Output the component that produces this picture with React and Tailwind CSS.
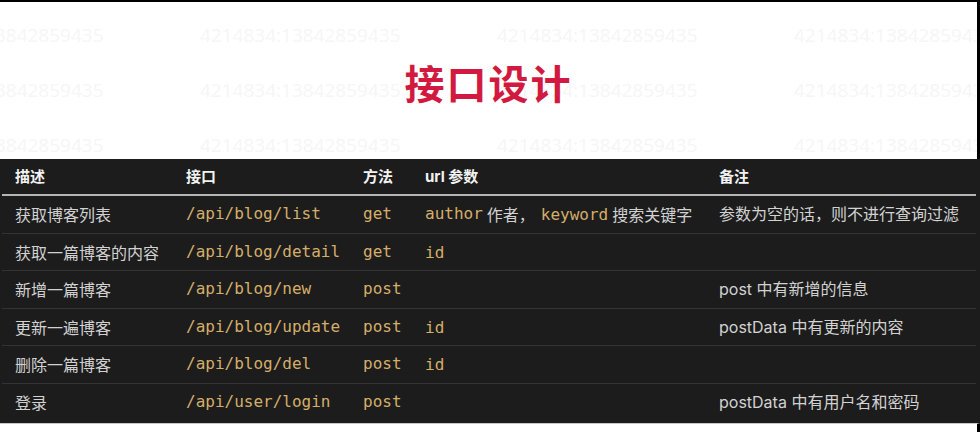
const mono = { fontFamily: '"DejaVu Sans Mono", "Liberation Mono", monospace' };

const rows = [
  { desc: '获取博客列表', api: '/api/blog/list', method: 'get', params: 'list', note: '参数为空的话，则不进行查询过滤' },
  { desc: '获取一篇博客的内容', api: '/api/blog/detail', method: 'get', params: 'id', note: '' },
  { desc: '新增一篇博客', api: '/api/blog/new', method: 'post', params: '', note: 'post 中有新增的信息' },
  { desc: '更新一遍博客', api: '/api/blog/update', method: 'post', params: 'id', note: 'postData 中有更新的内容' },
  { desc: '删除一篇博客', api: '/api/blog/del', method: 'post', params: 'id', note: '' },
  { desc: '登录', api: '/api/user/login', method: 'post', params: '', note: 'postData 中有用户名和密码' },
];

const Code = ({ children }) => (
  <span className="text-[16px] text-[#d5ae6a]" style={mono}>{children}</span>
);

const Params = ({ value }) => {
  if (value === 'list') {
    return (
      <span className="flex items-center whitespace-nowrap">
        <Code>author</Code>
        <span className="ml-[4px]">作者，</span>
        <span className="ml-[6px]"><Code>keyword</Code></span>
        <span className="ml-[4px]">搜索关键字</span>
      </span>
    );
  }
  return <span>{value ? <Code>{value}</Code> : null}</span>;
};

const Watermark = () => {
  const lines = [0, 1, 2];
  const cols = [0, 1, 2, 3, 4];
  return (
    <div className="absolute left-[-97px] top-[22px] flex flex-col gap-[33px] pointer-events-none select-none">
      {lines.map((l) => (
        <div key={l} className="flex gap-[97px]">
          {cols.map((c) => (
            <span
              key={c}
              className="w-[200px] shrink-0 text-[19px] leading-[22px] text-[#f6f6f6] whitespace-nowrap"
              style={{ fontFamily: '"Open Sans", sans-serif' }}
            >
              4214834:13842859435
            </span>
          ))}
        </div>
      ))}
    </div>
  );
};

const cols = 'grid grid-cols-[171px_177px_62px_294px_1fr] items-center pl-[13px]';

export default function App() {
  return (
    <div
      className="w-[980px] h-[432px] bg-white overflow-hidden flex flex-col"
      style={{ fontFamily: '"Noto Sans CJK SC", "Noto Sans", sans-serif' }}
    >
      <div className="relative h-[159px] shrink-0 border-t-2 border-r-[3px] border-black overflow-hidden flex items-center justify-center">
        <Watermark />
        <h1 className="relative text-[40px] font-bold text-[#d21a40] tracking-[2px] mt-[2px]">接口设计</h1>
      </div>

      <div className="h-[264px] shrink-0 bg-[#1c1c1c] pl-[2px] pr-[4px] flex flex-col">
        <div className={`${cols} h-[37px] shrink-0 border-b-2 border-[#b5b5b5] text-[15px] font-bold text-[#f2f2f2]`}>
          <span>描述</span>
          <span>接口</span>
          <span>方法</span>
          <span>
            <span style={{ fontFamily: 'Inter, "Noto Sans CJK SC", sans-serif' }}>url</span> 参数
          </span>
          <span>备注</span>
        </div>
        {rows.map((r, i) => (
          <div
            key={r.api}
            className={`${cols} text-[16px] text-[#d2d2d2] ${i < rows.length - 1 ? 'h-[37.5px] shrink-0 border-b border-[#333333]' : 'flex-1 pb-[3px]'}`}
          >
            <span className="whitespace-nowrap">{r.desc}</span>
            <Code>{r.api}</Code>
            <Code>{r.method}</Code>
            <Params value={r.params} />
            <span
              className="whitespace-nowrap"
              style={{ fontFamily: 'Inter, "Noto Sans CJK SC", sans-serif' }}
            >
              {r.note}
            </span>
          </div>
        ))}
      </div>

      <div className="flex-1 bg-white border-t border-[#c8c8c8] border-r-[3px] border-r-black" />
    </div>
  );
}
